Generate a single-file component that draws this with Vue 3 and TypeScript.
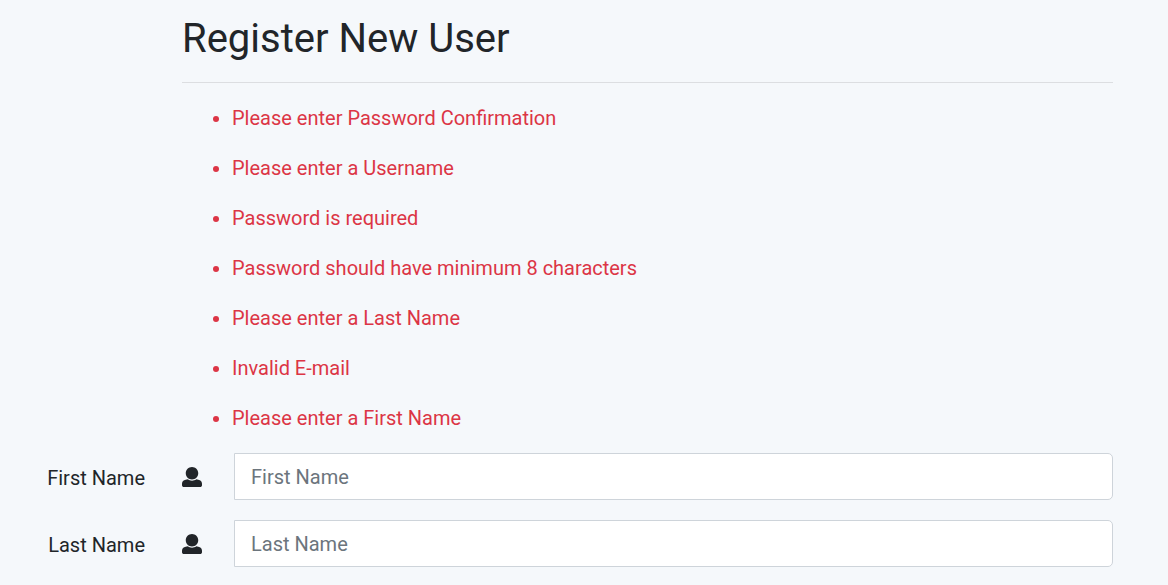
<script setup lang="ts">
interface Field {
  id: string
  label: string
}

const errors: string[] = [
  'Please enter Password Confirmation',
  'Please enter a Username',
  'Password is required',
  'Password should have minimum 8 characters',
  'Please enter a Last Name',
  'Invalid E-mail',
  'Please enter a First Name',
]

const fields: Field[] = [
  { id: 'first-name', label: 'First Name' },
  { id: 'last-name', label: 'Last Name' },
]
</script>

<template>
  <main class="page">
    <header class="heading">
      <h1>Register New User</h1>
      <hr />
    </header>
    <ul class="errors">
      <li v-for="error in errors" :key="error">{{ error }}</li>
    </ul>
    <form class="form" @submit.prevent>
      <div v-for="field in fields" :key="field.id" class="row">
        <label :for="field.id">{{ field.label }}</label>
        <svg class="icon" viewBox="0 0 512 512" aria-hidden="true">
          <path
            d="M256 0c88.366 0 160 71.634 160 160s-71.634 160-160 160S96 248.366 96 160 167.634 0 256 0zm183.283 333.821l-71.313-17.828c-74.923 53.890-165.738 41.864-223.940 0l-71.313 17.828C29.981 344.505 0 382.903 0 426.955V464c0 26.510 21.490 48 48 48h416c26.510 0 48-21.490 48-48v-37.045c0-44.052-29.981-82.450-72.717-93.134z"
          />
        </svg>
        <input :id="field.id" type="text" :placeholder="field.label" />
      </div>
    </form>
  </main>
</template>

<style>
body {
  margin: 0;
  background: #f5f8fb;
}
</style>

<style scoped>
.page {
  padding: 15px 55px 0 0;
  color: #212529;
  font-family: Roboto, sans-serif;
  font-size: 20px;
  line-height: 30px;
}

.heading {
  margin-left: 182px;
}

h1 {
  margin: 0;
  font-size: 40px;
  font-weight: 400;
  line-height: 48px;
}

hr {
  margin: 19px 0 20px;
  border: 0;
  border-top: 1px solid rgba(0, 0, 0, 0.1);
}

.errors {
  display: grid;
  gap: 20px;
  margin: 0 0 20px 182px;
  padding-left: 50px;
  color: #dc3545;
}

.form {
  display: grid;
  gap: 20px;
}

.row {
  display: grid;
  grid-template-columns: 145px 57px 1fr;
  align-items: center;
}

.row label {
  padding-top: 2px;
  text-align: right;
}

.icon {
  justify-self: end;
  width: 20px;
  height: 20px;
  fill: currentColor;
}

input {
  box-sizing: border-box;
  min-width: 0;
  margin-left: 32px;
  height: 47px;
  padding: 7px 16px;
  border: 1px solid #ced4da;
  border-radius: 0 5px 5px 0;
  background: #fff;
  color: #495057;
  font: inherit;
}

input::placeholder {
  color: #6c757d;
  opacity: 1;
}
</style>
